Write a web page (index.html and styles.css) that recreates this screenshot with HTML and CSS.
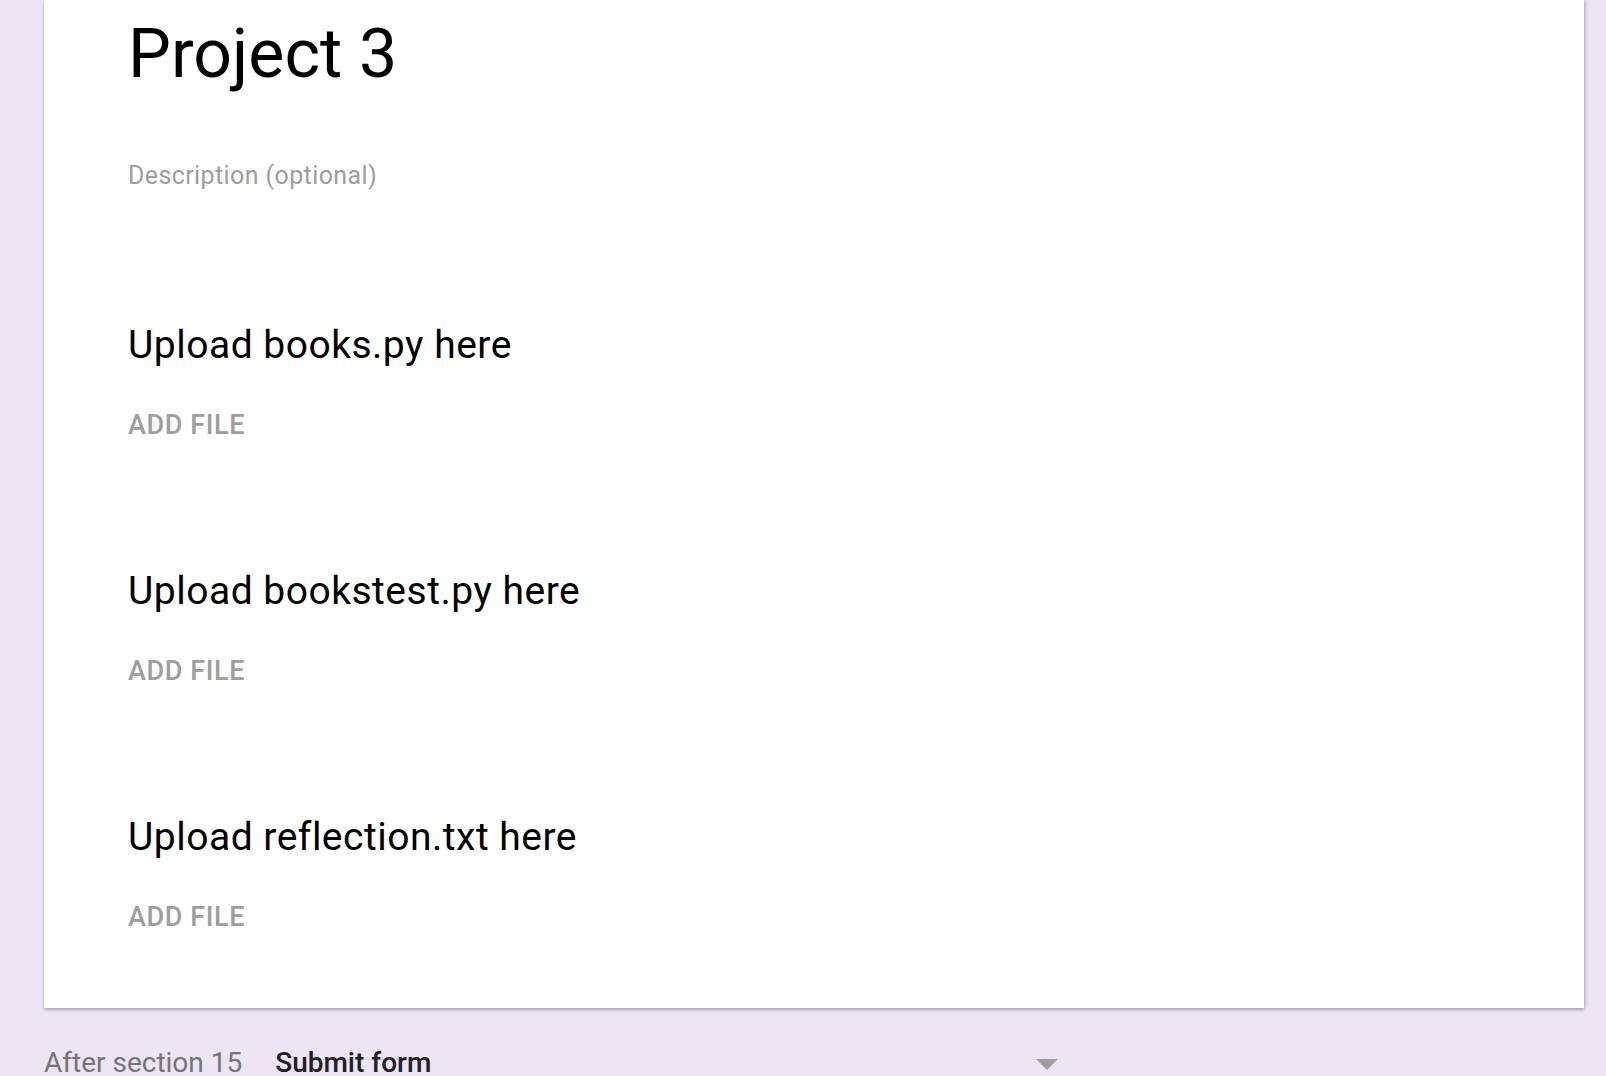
FILE: index.html
```html
<!DOCTYPE html>
<html>
<head>
<meta charset="utf-8">
<link rel="stylesheet" href="styles.css">
</head>
<body>
<div class="page">
  <div class="card">
    <h1 class="title">Project 3</h1>
    <div class="desc">Description (optional)</div>
    <div class="question">
      <div class="q-title">Upload books.py here</div>
      <div class="add-file">ADD FILE</div>
    </div>
    <div class="question">
      <div class="q-title">Upload bookstest.py here</div>
      <div class="add-file">ADD FILE</div>
    </div>
    <div class="question">
      <div class="q-title">Upload reflection.txt here</div>
      <div class="add-file">ADD FILE</div>
    </div>
  </div>
  <div class="footer">
    <span class="after">After section 15</span>
    <div class="select">
      <span class="select-value">Submit form</span>
      <span class="arrow"></span>
    </div>
  </div>
</div>
</body>
</html>
```
FILE: styles.css
```css
html, body {
  margin: 0;
  padding: 0;
  height: 100%;
  overflow: hidden;
}
body {
  background: #ebe5f4;
  font-family: Roboto, "Liberation Sans", sans-serif;
}
.page {
  padding-left: 44px;
  width: 1540px;
}
.card {
  background: #fff;
  padding: 14px 0 75px 84px;
  box-shadow: 0 2px 3px rgba(0,0,0,0.24), 2px 0 4px rgba(0,0,0,0.12);
}
.title {
  margin: 0;
  font-size: 68px;
  line-height: 80px;
  font-weight: 400;
  color: #000;
}
.desc {
  margin-top: 66px;
  font-size: 25px;
  line-height: 32px;
  letter-spacing: 0.4px;
  color: #9e9e9e;
}
.question {
  padding-top: 126px;
}
.desc + .question {
  padding-top: 129px;
}
.q-title {
  font-size: 39px;
  line-height: 48px;
  letter-spacing: 0.5px;
  color: #000;
}
.add-file {
  margin-top: 40px;
  font-size: 27px;
  line-height: 32px;
  letter-spacing: 0.6px;
  font-weight: 500;
  color: #9e9e9e;
}
.footer {
  margin-top: 38px;
  display: flex;
  align-items: center;
  font-size: 28px;
  line-height: 34px;
}
.after {
  color: #757575;
}
.select {
  margin-left: 33px;
  width: 783px;
  display: flex;
  justify-content: space-between;
  align-items: center;
}
.select-value {
  color: #202124;
  font-weight: 500;
}
.arrow {
  width: 0;
  height: 0;
  border-left: 11px solid transparent;
  border-right: 11px solid transparent;
  border-top: 11px solid #9e9e9e;
  margin-top: 2px;
}
```
